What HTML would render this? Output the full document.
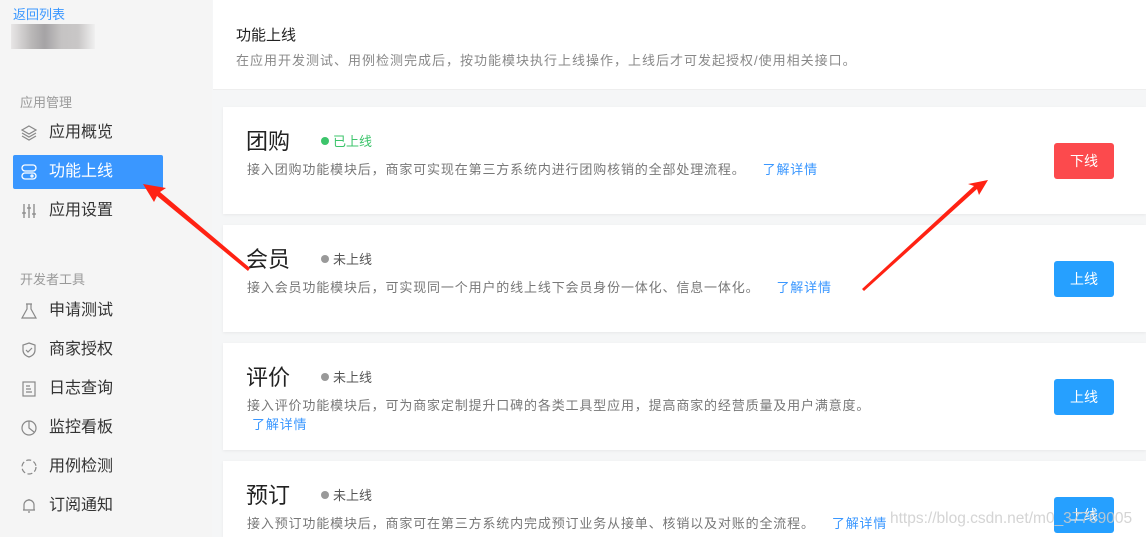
<!DOCTYPE html>
<html style="overflow:hidden"><head><meta charset="utf-8"><style>
*{margin:0;padding:0;box-sizing:border-box}
html,body{width:1146px;height:537px;overflow:hidden}
body{background:#f5f6f7;font-family:"Liberation Sans","Noto Sans CJK SC",sans-serif;position:relative}
.side{position:absolute;left:0;top:0;width:212px;height:537px;background:#f5f5f5}
.back{position:absolute;left:13px;top:4px;font-size:13px;color:#3a97ff}
.blur{position:absolute;left:11px;top:24px;width:84px;height:25px;background:linear-gradient(90deg,#e8e6e6,#b9b7b7 25%,#a5a3a5 40%,#c5c3c3 60%,#c9c7c7 80%,#f0f0f0)}
.grp{position:absolute;left:20px;font-size:13px;color:#999}
.it{position:absolute;left:13px;width:150px;height:34px;font-size:16px;color:#333;line-height:34px;padding-left:36px}
.it svg{position:absolute;left:8px;top:9px}
.act{background:#3a97ff;color:#fff;border-radius:2px}
.hdr{position:absolute;left:213px;top:0;width:933px;height:90px;background:#fff;border-bottom:1px solid #eee}
.hdr h1{position:absolute;left:23px;top:24px;font-size:15px;font-weight:normal;color:#222}
.hdr p{position:absolute;left:23px;top:50px;font-size:13px;color:#888;letter-spacing:1px;white-space:nowrap}
.card{position:absolute;left:223px;width:923px;height:107px;background:#fff;box-shadow:0 1px 3px rgba(0,0,0,.06);overflow:hidden}
.card .t{position:absolute;left:23px;top:17px;font-size:22px;color:#222}
.card .s{position:absolute;left:98px;top:24px;font-size:13px;color:#555}
.card .s:before{content:"";display:inline-block;width:8px;height:8px;border-radius:50%;background:#999;margin-right:4px;vertical-align:1px}
.card .s.on{color:#3cc46b}.card .s.on:before{background:#3cc46b}
.card .d{position:absolute;left:24px;top:53px;font-size:13px;color:#777;width:680px;line-height:19px;letter-spacing:0.85px}
.card .d a{color:#3a97ff;margin-left:17px}
.btn{position:absolute;left:831px;top:36px;width:60px;height:36px;border-radius:3px;background:#26a0ff;color:#fff;font-size:14px;text-align:center;line-height:36px}
.red{background:#fc4a4d}
.wm{position:absolute;left:890px;top:510px;font-size:15.5px;color:rgba(205,205,205,.85)}
</style></head><body>
<div class="side">
<div class="back">返回列表</div><div class="blur"></div>
<div class="grp" style="top:92px">应用管理</div>
<div class="it" style="top:116px"><svg width="16" height="16" viewBox="0 0 16 16" fill="none" stroke="#888" stroke-width="1.2"><path d="M8 1L15 5 8 9 1 5z"/><path d="M1 8l7 4 7-4M1 11l7 4 7-4"/></svg>应用概览</div>
<div class="it act" style="top:155px"><svg width="16" height="16" viewBox="0 0 16 16" fill="none" stroke="#fff" stroke-width="1.3"><rect x="1" y="1" width="14" height="6" rx="3"/><rect x="1" y="9" width="14" height="6" rx="3"/><circle cx="11" cy="12" r="1"/></svg>功能上线</div>
<div class="it" style="top:194px"><svg width="16" height="16" viewBox="0 0 16 16" fill="none" stroke="#888" stroke-width="1.3"><path d="M3 1v14M8 1v14M13 1v14M1 10h4M6 5h4M11 11h4"/></svg>应用设置</div>
<div class="grp" style="top:269px">开发者工具</div>
<div class="it" style="top:294px"><svg width="16" height="16" viewBox="0 0 16 16" fill="none" stroke="#888" stroke-width="1.2"><path d="M5 1h6M6 1v5L1 15h14L10 6V1"/></svg>申请测试</div>
<div class="it" style="top:333px"><svg width="16" height="16" viewBox="0 0 16 16" fill="none" stroke="#888" stroke-width="1.2"><path d="M8 1l6 2v5c0 4-3 6-6 7-3-1-6-3-6-7V3z"/><path d="M5 8l2 2 4-4"/></svg>商家授权</div>
<div class="it" style="top:372px"><svg width="16" height="16" viewBox="0 0 16 16" fill="none" stroke="#888" stroke-width="1.2"><rect x="2" y="1" width="12" height="14"/><path d="M5 5h4M5 8h5M5 11h6"/></svg>日志查询</div>
<div class="it" style="top:411px"><svg width="16" height="16" viewBox="0 0 16 16" fill="none" stroke="#888" stroke-width="1.2"><circle cx="8" cy="8" r="7"/><path d="M8 1v7l5 4"/></svg>监控看板</div>
<div class="it" style="top:450px"><svg width="16" height="16" viewBox="0 0 16 16" fill="none" stroke="#888" stroke-width="1.2" stroke-dasharray="5 2.5"><circle cx="8" cy="8" r="7"/></svg>用例检测</div>
<div class="it" style="top:489px"><svg width="16" height="16" viewBox="0 0 16 16" fill="none" stroke="#888" stroke-width="1.2"><path d="M3 12V7a5 5 0 0110 0v5H2h12M7 14h2M8 1v1"/></svg>订阅通知</div>
</div>
<div class="hdr"><h1>功能上线</h1><p>在应用开发测试、用例检测完成后，按功能模块执行上线操作，上线后才可发起授权/使用相关接口。</p></div>
<div class="card" style="top:107px"><div class="t">团购</div><div class="s on">已上线</div><div class="d">接入团购功能模块后，商家可实现在第三方系统内进行团购核销的全部处理流程。<a>了解详情</a></div><div class="btn red">下线</div></div>
<div class="card" style="top:225px"><div class="t">会员</div><div class="s">未上线</div><div class="d">接入会员功能模块后，可实现同一个用户的线上线下会员身份一体化、信息一体化。<a>了解详情</a></div><div class="btn">上线</div></div>
<div class="card" style="top:343px"><div class="t">评价</div><div class="s">未上线</div><div class="d" style="width:650px">接入评价功能模块后，可为商家定制提升口碑的各类工具型应用，提高商家的经营质量及用户满意度。<br><a style="margin-left:5px">了解详情</a></div><div class="btn">上线</div></div>
<div class="card" style="top:461px;height:76px"><div class="t">预订</div><div class="s">未上线</div><div class="d" style="width:740px">接入预订功能模块后，商家可在第三方系统内完成预订业务从接单、核销以及对账的全流程。<a>了解详情</a></div><div class="btn">上线</div></div>
<svg style="position:absolute;left:0;top:0" width="1146" height="537"><g fill="#ff2213"><polygon points="143,184 166,188 160,192 250,268 248,271 157,196 154,202"/><polygon points="988,180 979,195 977,189 864,291 862,289 974,186 968,184"/></g></svg>
<div class="wm">https://blog.csdn.net/m0_37769005</div>
</body></html>
